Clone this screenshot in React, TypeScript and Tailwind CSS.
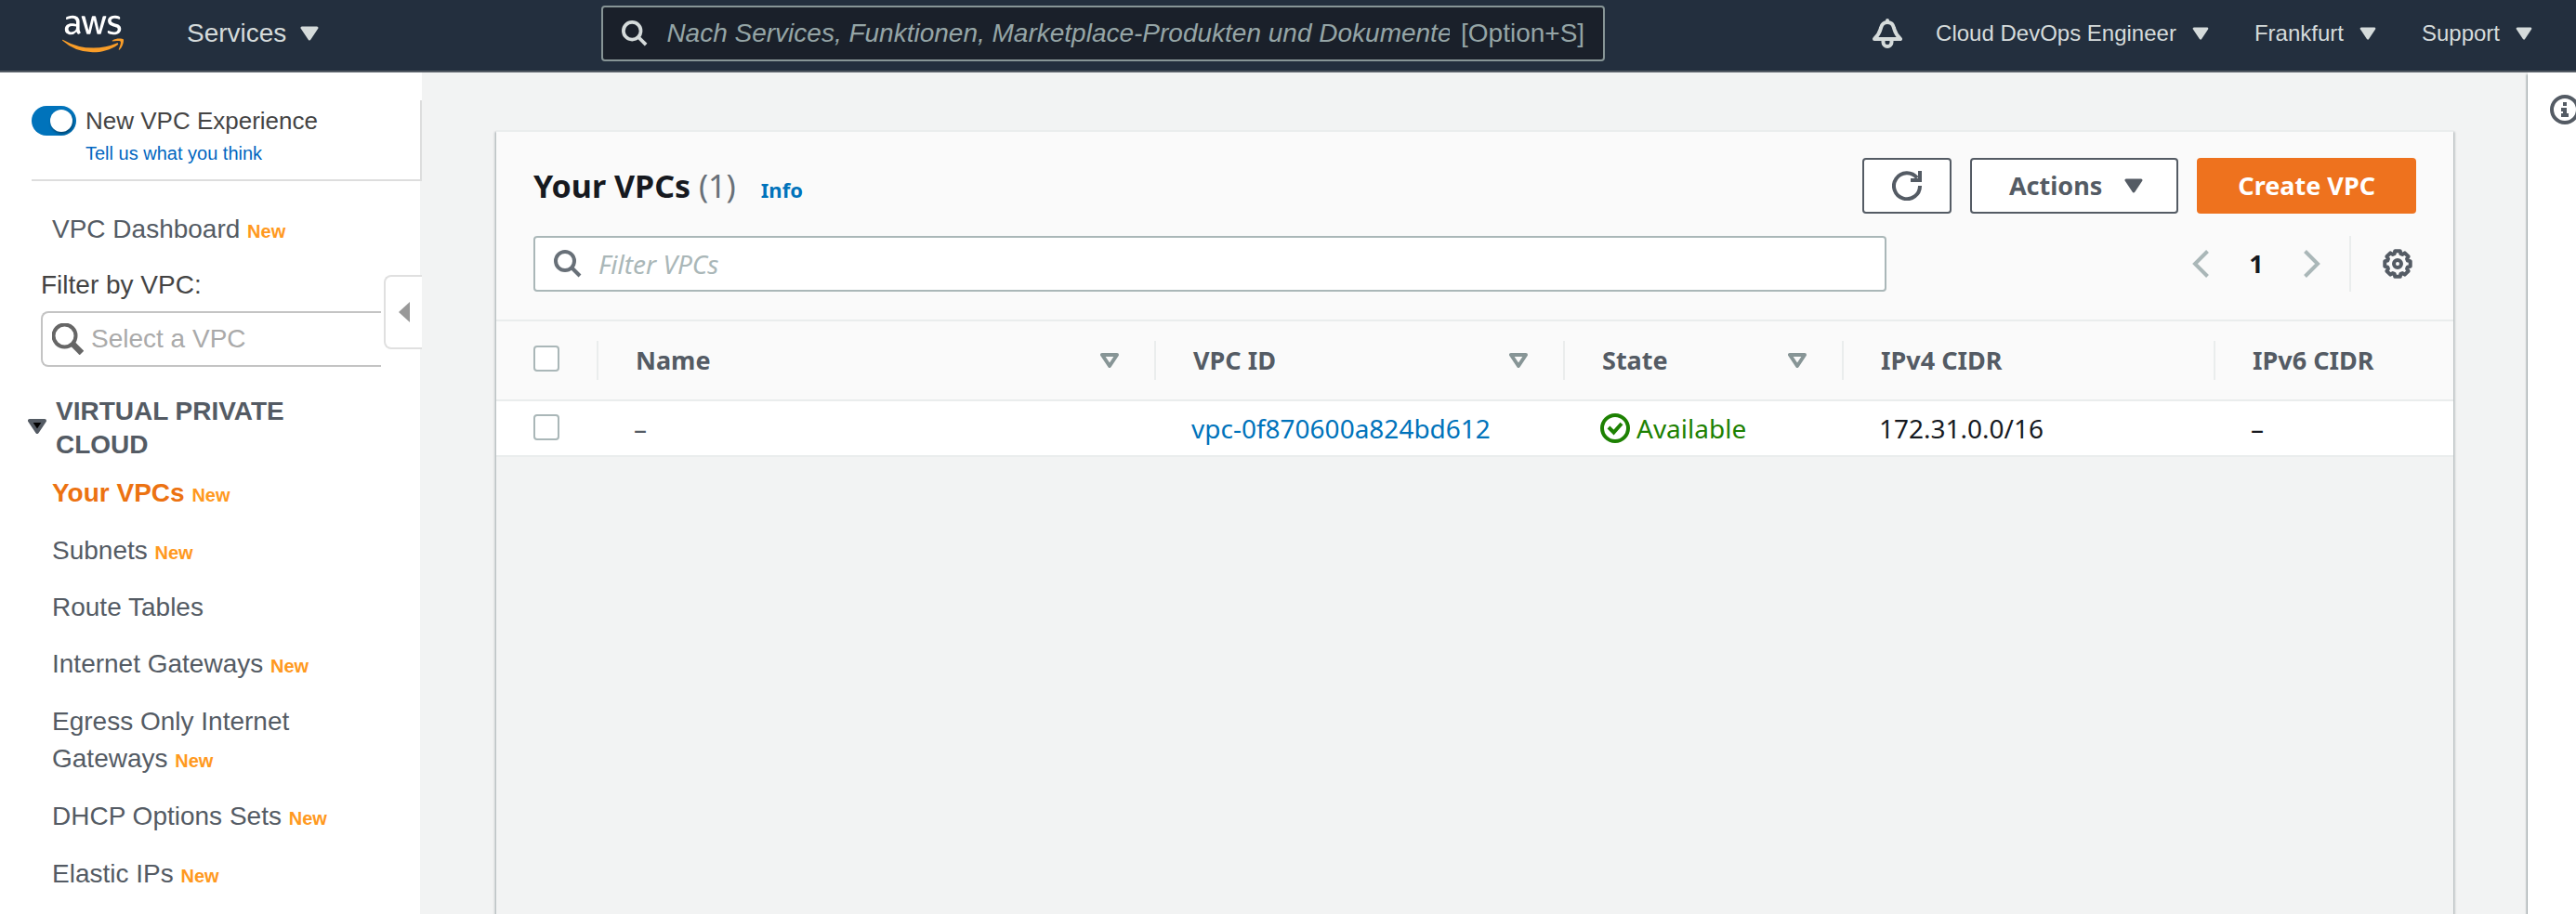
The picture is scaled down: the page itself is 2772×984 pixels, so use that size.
import { FaAws } from "react-icons/fa";

const navItems: { label: string; isNew: boolean; active?: boolean }[] = [
  { label: "Your VPCs", isNew: true, active: true },
  { label: "Subnets", isNew: true },
  { label: "Route Tables", isNew: false },
  { label: "Internet Gateways", isNew: true },
  { label: "Egress Only Internet Gateways", isNew: true },
  { label: "DHCP Options Sets", isNew: true },
  { label: "Elastic IPs", isNew: true },
];

const columns: { label: string; sortable: boolean; width: string }[] = [
  { label: "Name", sortable: true, width: "w-[600px]" },
  { label: "VPC ID", sortable: true, width: "w-[440px]" },
  { label: "State", sortable: true, width: "w-[300px]" },
  { label: "IPv4 CIDR", sortable: false, width: "w-[400px]" },
  { label: "IPv6 CIDR", sortable: false, width: "" },
];

function Caret({ className }: { className: string }) {
  return (
    <svg viewBox="0 0 20 16" className={className} aria-hidden="true">
      <path d="M2 2H18L10 14Z" fill="currentColor" stroke="currentColor" strokeWidth="3" strokeLinejoin="round" />
    </svg>
  );
}

function SearchIcon({ className }: { className: string }) {
  return (
    <svg viewBox="0 0 30 30" fill="none" stroke="currentColor" strokeWidth="4" className={className} aria-hidden="true">
      <circle cx="12" cy="12" r="10" />
      <path d="M19 19L28 28" />
    </svg>
  );
}

function GearIcon() {
  const points: string[] = [];
  for (let i = 0; i < 8; i++) {
    const a = (i * Math.PI) / 4;
    const steps: [number, number][] = [
      [-0.3, 11.4],
      [-0.2, 14],
      [0.2, 14],
      [0.3, 11.4],
    ];
    for (const [d, r] of steps) {
      points.push(`${(16 + r * Math.cos(a + d)).toFixed(2)},${(16 + r * Math.sin(a + d)).toFixed(2)}`);
    }
  }
  return (
    <svg viewBox="0 0 32 32" fill="none" stroke="currentColor" className="size-8" aria-hidden="true">
      <polygon points={points.join(" ")} strokeWidth="4" strokeLinejoin="round" />
      <circle cx="16" cy="16" r="4" strokeWidth="4" />
    </svg>
  );
}

function NewBadge() {
  return <span className="text-[20px] leading-none font-bold text-[#ff9920]">New</span>;
}

/* The last word and the badge stay on one line. */
function NavLabel({ label, isNew }: { label: string; isNew: boolean }) {
  const cut = label.lastIndexOf(" ") + 1;
  return (
    <>
      {label.slice(0, cut)}
      <span className="whitespace-nowrap">
        {label.slice(cut)}
        {isNew && (
          <>
            {" "}
            <NewBadge />
          </>
        )}
      </span>
    </>
  );
}

function HeaderMenu({ label }: { label: string }) {
  return (
    <button className="flex items-center gap-[17px] text-[24px]">
      {label}
      <Caret className="h-[14px] w-[18px]" />
    </button>
  );
}

function Checkbox({ label }: { label: string }) {
  return (
    <input
      type="checkbox"
      aria-label={label}
      className="mb-[2px] block size-7 appearance-none rounded-[4px] border-2 border-[#aab7b8] bg-white checked:bg-[#0073bb]"
    />
  );
}

function TopBar() {
  return (
    <header className="border-b-2 border-[#545b64] bg-[#232f3e] pb-1 text-[#d5dbdb]">
      <div className="flex h-[72px] items-center pr-[47px] pl-[67px]">
        <svg width="0" height="0" className="absolute" aria-hidden="true">
          <defs>
            <linearGradient id="aws-fill" gradientUnits="userSpaceOnUse" x1="0" y1="0" x2="0" y2="512">
              <stop offset="0.57" stopColor="#ffffff" />
              <stop offset="0.57" stopColor="#f99d28" />
            </linearGradient>
          </defs>
        </svg>
        <a href="#home" aria-label="AWS" className="shrink-0">
          <FaAws fill="url(#aws-fill)" className="h-[53px] w-[66px]" />
        </a>
        <button className="ml-[68px] flex shrink-0 items-center gap-[15px] text-[28px]">
          Services
          <Caret className="h-4 w-5" />
        </button>
        <div className="mr-[288px] ml-[304px] flex h-[60px] min-w-0 flex-1 items-center rounded-[4px] border-2 border-[#879596] bg-[#1a202a] px-5">
          <SearchIcon className="size-7 shrink-0" />
          <input
            type="text"
            aria-label="Suche"
            placeholder="Nach Services, Funktionen, Marketplace-Produkten und Dokumenten suchen"
            className="ml-5 min-w-0 flex-1 bg-transparent text-[28px] outline-none placeholder:text-[#95a5a6] placeholder:italic"
          />
          <span className="ml-3 text-[28px] text-[#95a5a6]">[Option+S]</span>
        </div>
        <button aria-label="Notifications" className="mr-9 shrink-0">
          <svg viewBox="0 0 32 32" fill="none" stroke="currentColor" strokeWidth="4" strokeLinecap="round" strokeLinejoin="round" className="size-8">
            <path d="M2 22C8 16 8 13 9 10C10 6 12 4 16 4S22 6 23 10C24 13 24 16 30 22Z" />
            <path d="M16 2V4M11.500 23V25.500A4.500 4.500 0 0 0 20.500 25.500V23" />
          </svg>
        </button>
        <nav className="flex shrink-0 gap-[49px]">
          <HeaderMenu label="Cloud DevOps Engineer" />
          <HeaderMenu label="Frankfurt" />
          <HeaderMenu label="Support" />
        </nav>
      </div>
    </header>
  );
}

function Sidebar() {
  return (
    <aside className="relative flex w-[454px] shrink-0 flex-col">
      <div className="bg-white pt-[30px] pl-[34px]">
        <div className="border-r-2 border-b-2 border-[#dddddd] pt-[6px] pb-4">
          <label className="flex h-8 items-center gap-[10px] text-[26px] text-[#444444]">
            <span className="relative flex">
              <input
                type="checkbox"
                role="switch"
                defaultChecked
                className="peer h-8 w-12 appearance-none rounded-full bg-[#879596] checked:bg-[#0073bb]"
              />
              <span className="pointer-events-none absolute top-1 left-1 size-6 rounded-full bg-white shadow-[1px_2px_3px_rgba(0,0,0,0.4)] peer-checked:left-5" />
            </span>
            New VPC Experience
          </label>
          <a href="#feedback" className="mt-[7px] ml-[58px] block text-[20px] leading-6 text-[#0066c0]">
            Tell us what you think
          </a>
        </div>
      </div>
      <div className="mr-[2px] flex-1 bg-white pt-8">
        <a href="#dashboard" className="ml-14 block text-[28px] leading-10 text-[#545b64]">
          VPC Dashboard <NewBadge />
        </a>
        <label htmlFor="vpc-select" className="mt-[26px] ml-11 block text-[28px] leading-7 text-[#444444]">
          Filter by VPC:
        </label>
        <div className="mt-[14px] mr-[42px] ml-11 flex h-[60px] items-center rounded-l-lg border-2 border-r-0 border-[#c4c4c4] pl-[10px]">
          <svg viewBox="0 0 34 34" fill="none" stroke="#666666" className="size-[34px] shrink-0" aria-hidden="true">
            <circle cx="13.500" cy="13.500" r="12" strokeWidth="4" />
            <path d="M22 22L32 32" strokeWidth="6.500" />
          </svg>
          <input
            id="vpc-select"
            type="text"
            placeholder="Select a VPC"
            className="ml-2 w-full min-w-0 bg-transparent text-[28px] outline-none placeholder:text-[#aaaaaa]"
          />
        </div>
        <button className="mt-[30px] ml-[30px] flex items-center gap-[10px] text-left text-[28px] leading-9 font-bold text-[#545b64]">
          <svg viewBox="0 0 20 16" className="mb-1 h-4 w-5 shrink-0" aria-hidden="true">
            <path d="M2 2H18L10 14Z" fill="#000000" stroke="#545b64" strokeWidth="4" strokeLinejoin="round" />
          </svg>
          <span className="w-[300px]">VIRTUAL PRIVATE CLOUD</span>
        </button>
        <nav className="mt-[14px] mr-[60px] ml-14 flex flex-col gap-[22px] text-[28px] text-[#545b64]">
          {navItems.map((item) => (
            <a
              key={item.label}
              href="#nav"
              className={
                item.active
                  ? "leading-10 font-bold text-[#ec7211]"
                  : item.isNew
                    ? "leading-10"
                    : "leading-[38px]"
              }
            >
              <NavLabel label={item.label} isNew={item.isNew} />
            </a>
          ))}
        </nav>
      </div>
      <button
        aria-label="Collapse navigation"
        className="absolute top-[218px] right-0 flex h-20 w-[41px] items-center justify-center rounded-l-lg border-2 border-r-0 border-[#e0e0e0] bg-white"
      >
        <svg viewBox="0 0 12 22" className="h-[22px] w-3" aria-hidden="true">
          <path d="M12 0V22L0 11Z" fill="#999999" />
        </svg>
      </button>
    </aside>
  );
}

function VpcTable() {
  return (
    <table className="w-full table-fixed border-collapse text-left text-[28px] leading-[42px] text-[#16191f]">
      <thead>
        <tr className="h-[85px] border-b-2 border-[#eaeded] bg-[#fafafa] text-[27px] text-[#545b64]">
          <th className="w-[108px] p-0 pb-[2px] pl-10">
            <Checkbox label="Select all VPCs" />
          </th>
          {columns.map((col) => (
            <th key={col.label} className={`p-0 font-bold ${col.width}`}>
              <div className="flex items-center justify-between border-l-2 border-[#eaeded] pr-[38px] pl-10">
                {col.label}
                {col.sortable && (
                  <button aria-label={`Sort by ${col.label}`}>
                    <svg viewBox="0 0 20 16" fill="none" className="block h-4 w-5">
                      <path d="M2 2H18L10 14Z" stroke="#879596" strokeWidth="4" strokeLinejoin="round" />
                    </svg>
                  </button>
                )}
              </div>
            </th>
          ))}
        </tr>
      </thead>
      <tbody>
        <tr className="h-[60px] border-b-2 border-[#eaeded] bg-white">
          <td className="p-0 pl-10">
            <Checkbox label="Select vpc-0f870600a824bd612" />
          </td>
          <td className="p-0 pl-10 text-[#545b64]">–</td>
          <td className="p-0 pl-10">
            <a href="#vpc" className="text-[#0073bb]">
              vpc-0f870600a824bd612
            </a>
          </td>
          <td className="p-0 pl-10">
            <span className="flex items-center gap-[7px] text-[#1d8102]">
              <svg viewBox="0 0 32 32" fill="none" stroke="currentColor" strokeWidth="4" className="size-8" aria-hidden="true">
                <circle cx="16" cy="16" r="14" />
                <path d="M9 15L14.500 20.500L23 11" />
              </svg>
              Available
            </span>
          </td>
          <td className="p-0 pl-10">172.31.0.0/16</td>
          <td className="p-0 pl-10">–</td>
        </tr>
      </tbody>
    </table>
  );
}

function VpcPanel() {
  return (
    <section className="flex-1 border-t-2 border-[#eaeded] font-['Noto_Sans',sans-serif] shadow-[0_2px_2px_rgba(0,28,36,0.3),2px_2px_2px_rgba(0,28,36,0.15),-2px_2px_2px_rgba(0,28,36,0.15)]">
      <div className="border-b-2 border-[#eaeded] bg-[#fafafa] px-10 pt-7 pb-[30px]">
        <div className="flex h-[60px] items-center justify-between">
          <div className="flex items-baseline">
            <h1 className="text-[34px] font-bold text-[#16191f]">
              Your VPCs <span className="font-normal text-[#687078]">(1)</span>
            </h1>
            <a href="#info" className="ml-[27px] text-[22px] font-bold text-[#0073bb]">
              Info
            </a>
          </div>
          <div className="flex gap-5 text-[27px] font-bold">
            <button
              aria-label="Refresh"
              className="flex h-[60px] w-24 items-center justify-center rounded-[4px] border-2 border-[#545b64] bg-white text-[#545b64]"
            >
              <svg viewBox="0 0 32 32" fill="none" stroke="currentColor" strokeWidth="4" className="size-8">
                <path d="M30 16A14 14 0 1 1 27 7.500" />
                <path d="M30 0V10H20" />
              </svg>
            </button>
            <button className="flex h-[60px] items-center gap-6 rounded-[4px] border-2 border-[#545b64] bg-white pr-9 pl-10 text-[#545b64]">
              Actions
              <Caret className="h-4 w-5" />
            </button>
            <button className="h-[60px] rounded-[4px] bg-[#ee721e] px-11 text-white">Create VPC</button>
          </div>
        </div>
        <div className="mt-6 flex h-[60px] items-center justify-between">
          <div className="flex h-[60px] w-[calc(100%-570px)] items-center rounded-[4px] border-2 border-[#aab7b8] bg-white px-5">
            <SearchIcon className="size-[30px] shrink-0 text-[#687078]" />
            <input
              type="text"
              aria-label="Filter VPCs"
              placeholder="Filter VPCs"
              className="ml-[18px] min-w-0 flex-1 bg-transparent text-[28px] outline-none placeholder:text-[#aab7b8] placeholder:italic"
            />
          </div>
          <div className="flex items-center">
            <button aria-label="Previous page" className="text-[#aab7b8]">
              <svg viewBox="0 0 18 30" fill="none" stroke="currentColor" strokeWidth="4" className="h-[30px] w-[18px]">
                <path d="M16.500 1.500L3 15L16.500 28.500" />
              </svg>
            </button>
            <span className="w-[102px] text-center text-[27px] font-bold text-[#16191f]">1</span>
            <button aria-label="Next page" className="text-[#aab7b8]">
              <svg viewBox="0 0 18 30" fill="none" stroke="currentColor" strokeWidth="4" className="h-[30px] w-[18px]">
                <path d="M1.500 1.500L15 15L1.500 28.500" />
              </svg>
            </button>
            <span className="mr-[34px] ml-[31px] h-[60px] w-[2px] bg-[#eaeded]" />
            <button aria-label="Preferences" className="mr-1 text-[#545b64]">
              <GearIcon />
            </button>
          </div>
        </div>
      </div>
      <VpcTable />
    </section>
  );
}

export default function App() {
  return (
    <div className="flex min-h-screen flex-col overflow-hidden bg-[#f2f3f3] font-['Liberation_Sans',Arial,sans-serif]">
      <TopBar />
      <div className="flex flex-1">
        <Sidebar />
        <main className="flex min-w-0 flex-1 flex-col px-20 pt-[62px]">
          <VpcPanel />
        </main>
        <aside className="w-[52px] shrink-0 overflow-hidden bg-white pt-6 pl-6 shadow-[-1px_2px_2px_rgba(0,28,36,0.45)]">
          <button aria-label="Help" className="block w-8 text-[#545b64]">
            <svg viewBox="0 0 32 32" className="block size-8">
              <circle cx="16" cy="16" r="14" fill="none" stroke="currentColor" strokeWidth="4" />
              <path d="M14 8H18V12H14ZM12 14H18V20H20V24H12V20H14V18H12Z" fill="currentColor" />
            </svg>
          </button>
        </aside>
      </div>
    </div>
  );
}
